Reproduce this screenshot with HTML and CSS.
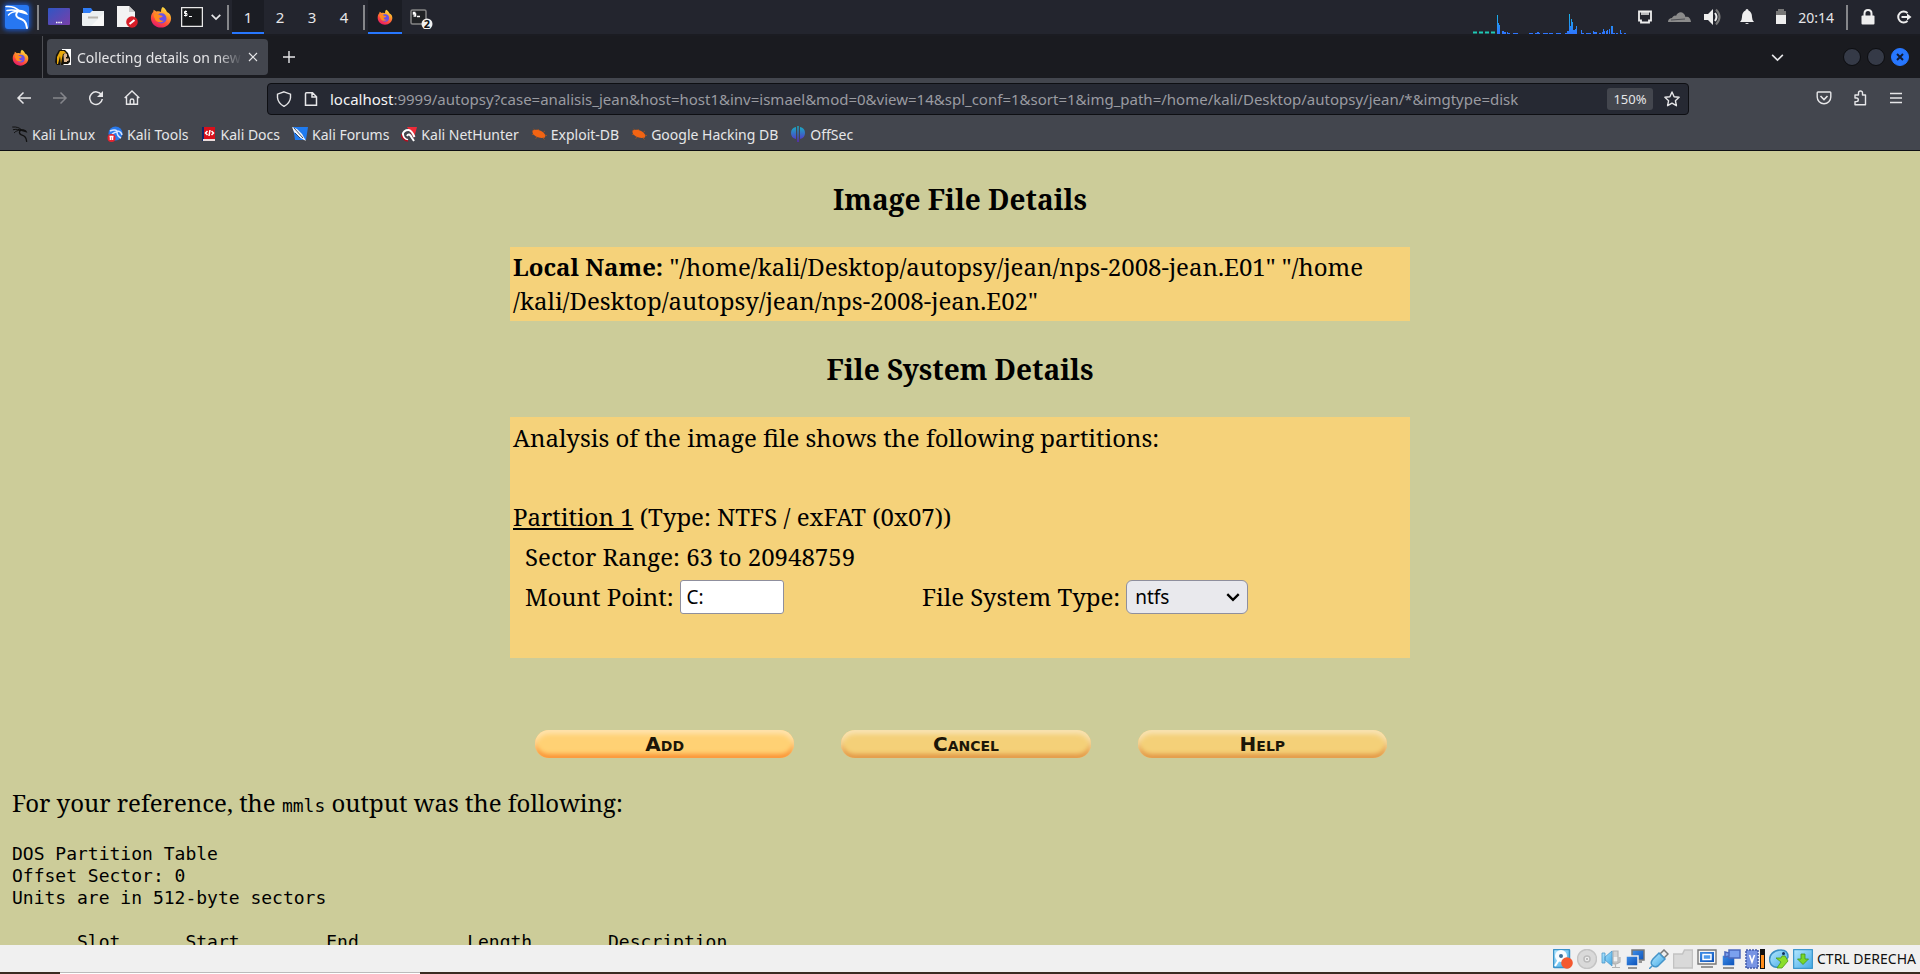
FILE: index.html
```html
<!DOCTYPE html>
<html lang="en">
<head>
<meta charset="utf-8">
<title>Collecting details on new image file</title>
<link rel="stylesheet" href="styles.css">
</head>
<body>
<svg class="defs" aria-hidden="true">
  <defs>
    <linearGradient id="fox-body" x1="0.8" y1="0" x2="0.3" y2="1">
      <stop offset="0" stop-color="#fff04a"/><stop offset="0.35" stop-color="#ffa02c"/><stop offset="0.7" stop-color="#ff4a3c"/><stop offset="1" stop-color="#e3186c"/>
    </linearGradient>
    <linearGradient id="blue-purple" x1="0" y1="0" x2="1" y2="1">
      <stop offset="0" stop-color="#2f56c4"/><stop offset="1" stop-color="#7a3fa8"/>
    </linearGradient>
    <linearGradient id="offsec-fill" x1="0" y1="0" x2="0" y2="1">
      <stop offset="0" stop-color="#16b3c4"/><stop offset="1" stop-color="#5b25c8"/>
    </linearGradient>
    <linearGradient id="graph-fill" x1="0" y1="0" x2="0" y2="1">
      <stop offset="0" stop-color="#17b4e6"/><stop offset="1" stop-color="#2f74ff"/>
    </linearGradient>
    <linearGradient id="vb-blue" x1="0" y1="0" x2="1" y2="1">
      <stop offset="0" stop-color="#3f8fe8"/><stop offset="1" stop-color="#0a4fb8"/>
    </linearGradient>
    <linearGradient id="vb-sky" x1="0" y1="0" x2="1" y2="1">
      <stop offset="0" stop-color="#b5e8ff"/><stop offset="1" stop-color="#43a9e6"/>
    </linearGradient>
    <symbol id="firefox" viewBox="0 0 24 24">
      <path d="M14 1c3 2 4 4 4.500 5.500C22 8 23 11 23 13.500 23 19 18 23.500 12 23.500S1 19 1 13c0-3 1-5 2.500-6.500L4 4l3 2c2-.6 4-.3 5 .5C12 4 12.500 2 14 1z" fill="url(#fox-body)"/>
      <circle cx="12.500" cy="13.500" r="5.500" fill="#6a4fe8"/>
      <path d="M4 9c3-1 5 0 7 1l3 1c-1 2-3 2-4 2 0 2 2 3.500 5 3-3 3-9 2-10-3-.5 0-1-2-1-4z" fill="#ff8a1e"/>
      <path d="M8.500 9.500c2-1.500 5-1.500 7 .5 1.500 1.500 2 3.500 1.500 5 1-5-3-8-8.500-5.500z" fill="#3f7cf0"/>
    </symbol>
    <symbol id="dragon" viewBox="0 0 24 24">
      <path d="M1 1.500c6-.5 10 1 13 4M2 5.500c4-1 8-.5 11 .5M3.500 10c2-2.500 5-3.500 9-3.500" fill="none" stroke="currentColor" stroke-width="1.500" stroke-linecap="round"/>
      <path d="M13 6.500c-2.500 2-2.500 5 .5 6.500 4 1.500 8 2.500 8.500 10" fill="none" stroke="currentColor" stroke-width="2" stroke-linecap="round"/>
      <path d="M11 4.500l6 .5c3 .6 5 2.200 6 5l-3.500-1L14 7.500z" fill="currentColor"/>
    </symbol>
    <symbol id="beetle" viewBox="0 0 16 16">
      <path d="M2.500 3l3 2.500M1 8.500l3-.5M4.500 12.500l2-1.500M8 4.500L7 3M13 9l3 .5M12 12l1.500 1.500M12.500 6l1.500-1" stroke="#b8530f" stroke-width=".8" fill="none"/>
      <path d="M1.500 4.500C4 3 8 3.500 11 5.500c2.500 1.500 4 4 3 6-3 .8-6 .6-9-1C2.500 9 1 7 1.500 4.500z" fill="#f26413"/>
    </symbol>
    <symbol id="chevron" viewBox="0 0 14 14"><path d="M2 4.500l5 5 5-5" fill="none" stroke="currentColor"/></symbol>
  </defs>
</svg>

<header class="panel">
  <button class="cell logo-cell" aria-label="Applications"><span class="logo"><svg width="24" height="24"><use href="#dragon"/></svg></span></button>
  <span class="sep"></span>
  <nav class="launchers" aria-label="Launchers">
    <button class="cell" aria-label="Show desktop"><svg width="22" height="18" viewBox="0 0 22 18"><rect width="22" height="17" rx="1" fill="url(#blue-purple)"/><path d="M8 14.500h6" stroke="#fff" stroke-width="1.500" stroke-dasharray="1.500 .75"/></svg></button>
    <button class="cell" aria-label="Files"><svg width="22" height="20" viewBox="0 0 22 20"><path d="M1 1h8l2 3h9v4H1z" fill="#2f7cf6"/><path d="M0 6h8l2-2h12v14q0 1-1 1H1q-1 0-1-1z" fill="#eceff1"/><path d="M22 6v12q0 1-1 1H9z" fill="#f8f8f8"/><path d="M6 10.500h10" stroke="#b8b4ae" stroke-width="2"/></svg></button>
    <button class="cell" aria-label="Text editor"><svg width="21" height="22" viewBox="0 0 21 22"><path d="M0 0h12l6 6v15H0z" fill="#f3f3f3"/><path d="M12 0v6h6z" fill="#c8c8c8"/><circle cx="15" cy="16" r="5.800" fill="#d81e28"/><path d="M12.500 18l5-4" stroke="#fff" stroke-width="2"/></svg></button>
    <button class="cell" aria-label="Firefox"><svg width="22" height="22"><use href="#firefox"/></svg></button>
    <button class="cell cell-narrow" aria-label="Terminal"><svg width="22" height="20" viewBox="0 0 22 20"><rect x=".5" y=".5" width="21" height="19" fill="#17191c" stroke="#e8e8e8"/><path d="M6 4.500H3.500v2H6v2H3M4.700 3.500v6M8 9.500h3" fill="none" stroke="#fff" stroke-width="1"/></svg></button>
    <button class="cell cell-chevron" aria-label="More"><svg class="bold" width="12" height="12"><use href="#chevron"/></svg></button>
  </nav>
  <span class="sep"></span>
  <nav class="spaces" aria-label="Workspaces">
    <button class="space active">1</button><button class="space">2</button><button class="space">3</button><button class="space">4</button>
  </nav>
  <span class="sep sep-tasks"></span>
  <nav class="tasks" aria-label="Windows">
    <button class="cell active" aria-label="Firefox window"><svg width="16" height="16"><use href="#firefox"/></svg></button>
    <button class="cell task-term" aria-label="Terminal windows"><svg width="24" height="24" viewBox="0 0 24 24"><rect x="2" y="5" width="15" height="14" rx="1.500" fill="#202225" stroke="#858585"/><path d="M6.500 7.500h-2v1.500h2v2h-2M8 11.500h3" fill="none" stroke="#fff"/><circle cx="18" cy="19" r="5.500" fill="#f1f1f1"/></svg><span class="count">2</span></button>
  </nav>
  <div class="tray">
    <svg class="graph" width="153" height="20" viewBox="0 0 153 20">
      <path d="M0 18.500h4m2 0h4m2 0h4m2 0h4" stroke="#1fc9b4" stroke-width="2"/>
      <path d="M24 20V1h1v8h1v2h1v9zM29 20v-3h2v1h2v2h1v-2h1v1h2v1zM40 19h5v1h-5zM56 19h4v1h-4zM62 19h2v-1h2v1h1v1h-5zM70 19h5v1h-5zM76 19h4v1h-4zM83 19h5v1h-5zM92 20v-1h2v-2h2V0h1v12h1V5h1v3h1v12zM100 20v-4h2v-1h1v-3h1v8zM108 20v-4h1v3h2v1zM113 19h5v1h-5zM120 20v-3h1v1h3v2zM126 19h2v1h-2zM129 20v-2h1v-3h1v2h1v3zM133 20v-3h1v-1h1v4zM136 20v-5h1v5zM138 20v-8h2v8zM140 19h2v1h-2zM143 19h2v1h-2zM147 20v-4h1v3h1v1zM151 19h2v1h-2z" fill="url(#graph-fill)"/>
    </svg>
    <button class="tray-item" aria-label="Network"><svg width="16" height="16" viewBox="0 0 16 16"><path d="M2 2.500h12v9h-2v2H4v-2H2z" fill="none" stroke="#eee" stroke-width="1.800"/><path d="M5 3v3M7 3v3M9 3v3M11 3v3" stroke="#eee"/></svg></button>
    <button class="tray-item" aria-label="Cloud"><svg width="23" height="12" viewBox="0 0 23 12"><path d="M0 11c0-3 2-4 4-4 1-2 3-3 4-2C10 0 16 0 17.500 6c3-1 5 1 5.500 5z" fill="#8b8b8b"/><path d="M3 9l14-1" stroke="#23252e" stroke-width=".6"/></svg></button>
    <button class="tray-item" aria-label="Volume"><svg width="18" height="18" viewBox="0 0 18 18"><path d="M0 6h4l5-5v16l-5-5H0z" fill="#eee"/><path d="M11 5q3 4 0 8" fill="none" stroke="#eee" stroke-width="2"/><path d="M12 1.500q7 7.500 0 15" fill="none" stroke="#777" stroke-width="2"/></svg></button>
    <button class="tray-item" aria-label="Notifications"><svg width="14" height="16" viewBox="0 0 14 16"><path d="M7 0q1.500 0 1.500 1.500Q12 3 12 8q0 3 2 5H0q2-2 2-5 0-5 3.500-6.500Q5.500 0 7 0zM5 14h4q-2 2-4 0z" fill="#eee"/></svg></button>
    <button class="tray-item" aria-label="Battery"><svg width="12" height="16" viewBox="0 0 12 16"><path d="M1 2h2V0h6v2h2v5H1z" fill="#777"/><path d="M1 6h10v9H1z" fill="#eee"/></svg></button>
    <time class="clock">20:14</time>
    <span class="sep"></span>
    <button class="tray-item tray-lock" aria-label="Lock"><svg width="14" height="16" viewBox="0 0 14 16"><rect x=".5" y="6.500" width="13" height="9" rx="1" fill="#eee"/><path d="M3.500 7V4.500q0-3.500 3.500-3.500t3.500 3.500V7" fill="none" stroke="#eee" stroke-width="2"/></svg></button>
    <button class="tray-item tray-exit" aria-label="Log out"><svg width="16" height="14" viewBox="0 0 16 14"><path d="M11.500 3A5.500 5.500 0 1 0 11.500 11" fill="none" stroke="#eee" stroke-width="2"/><path d="M5.500 7H12" stroke="#eee" stroke-width="2"/><path d="M11 3.500L15.500 7 11 10.500z" fill="#eee"/></svg></button>
  </div>
</header>

<div class="tabbar">
  <svg class="tab-home" width="17" height="17"><use href="#firefox"/></svg>
  <span class="tab-divider"></span>
  <div class="tab">
    <svg width="16" height="16" viewBox="0 0 16 16"><path d="M7 0h9v16H7z" fill="#fff"/><path d="M4 1h6l3 3 1 3 1 2v4l-2 2H9l-1 1H6V9l-1 7H2l-1-1-1-2 1-7z" fill="#17130a"/><path d="M5 2h4l2 2-3 1-1 4-1 6-1-8-2 8H2V8z" fill="#e9a90c"/><path d="M8.500 6l1.500-2 2 1v3l2 2-1 3H9z" fill="#dcb38c"/><path d="M11 8h2v1.500h-2zM12 12h2v1h-2z" fill="#17130a"/></svg>
    <span class="tab-title">Collecting details on new</span>
    <button class="plain tab-close" aria-label="Close tab"><svg width="10" height="10" viewBox="0 0 10 10"><path d="M1 1l8 8M9 1l-8 8" stroke="currentColor" stroke-width="1.200"/></svg></button>
  </div>
  <button class="plain tab-new" aria-label="New tab"><svg width="12" height="12" viewBox="0 0 12 12"><path d="M6 0v12M0 6h12" stroke="currentColor" stroke-width="1.400"/></svg></button>
  <div class="window-controls">
    <button class="plain tab-list" aria-label="List all tabs"><svg width="15" height="15"><use href="#chevron"/></svg></button>
    <button class="dot" aria-label="Minimise"></button><button class="dot" aria-label="Maximise"></button><button class="dot dot-close" aria-label="Close"><svg width="8" height="8" viewBox="0 0 8 8"><path d="M1 1l6 6M7 1L1 7" stroke="#101a33" stroke-width="2"/></svg></button>
  </div>
</div>

<div class="toolbar">
  <div class="nav-buttons">
    <button class="plain" aria-label="Back"><svg width="16" height="16" viewBox="0 0 16 16"><path d="M15 8H2M7.500 2.500L2 8l5.500 5.500" fill="none" stroke="currentColor" stroke-width="1.500"/></svg></button>
    <button class="plain dim" aria-label="Forward"><svg width="16" height="16" viewBox="0 0 16 16"><path d="M1 8h13M8.500 2.500L14 8l-5.500 5.500" fill="none" stroke="currentColor" stroke-width="1.500"/></svg></button>
    <button class="plain" aria-label="Reload"><svg width="16" height="16" viewBox="0 0 16 16"><path d="M13.500 5A6.300 6.300 0 1 0 14.300 9" fill="none" stroke="currentColor" stroke-width="1.500"/><path d="M15 1v6H9z" fill="currentColor"/></svg></button>
    <button class="plain" aria-label="Home"><svg width="16" height="16" viewBox="0 0 16 16"><path d="M.7 8L8 1l7.300 7M2.500 7v7.300h11V7M6.200 14v-3.500q0-1.500 1.800-1.500t1.800 1.500V14" fill="none" stroke="currentColor" stroke-width="1.400"/></svg></button>
  </div>
  <div class="urlbar">
    <svg width="16" height="16" viewBox="0 0 16 16"><path d="M8 .8l6.500 2.400v3.500Q14 12 8 15.300 2 12 1.500 6.700V3.200z" fill="none" stroke="currentColor" stroke-width="1.400"/></svg>
    <svg width="16" height="16" viewBox="0 0 16 16"><path d="M3.500 1.700h6l4 4v8.600h-11V2.700q0-1 1-1zM9 2v4h4.500" fill="none" stroke="currentColor" stroke-width="1.500"/></svg>
    <a class="url" href="#"><b>localhost</b>:9999/autopsy?case=analisis_jean&amp;host=host1&amp;inv=ismael&amp;mod=0&amp;view=14&amp;spl_conf=1&amp;sort=1&amp;img_path=/home/kali/Desktop/autopsy/jean/*&amp;imgtype=disk</a>
    <button class="zoom">150%</button>
    <button class="plain star" aria-label="Bookmark"><svg width="16" height="16" viewBox="0 0 16 16"><path d="M8 1l2.100 4.700 5 .6-3.700 3.400 1 5L8 12.200 3.600 14.700l1-5L.9 6.300l5-.6z" fill="none" stroke="currentColor" stroke-width="1.400" stroke-linejoin="round"/></svg></button>
  </div>
  <div class="tool-buttons">
    <button class="plain" aria-label="Pocket"><svg width="16" height="16" viewBox="0 0 16 16"><path d="M2 2h12q.8 0 .8.800V7a6.800 6.800 0 0 1-13.600 0V2.800Q1.200 2 2 2z" fill="none" stroke="currentColor" stroke-width="1.400"/><path d="M4.500 6L8 9.500 11.500 6" fill="none" stroke="currentColor" stroke-width="1.600"/></svg></button>
    <button class="plain" aria-label="Extensions"><svg width="16" height="16" viewBox="0 0 16 16"><path d="M3 14.800h10.500V5H10.500V3a2 2 0 0 0-4 0v2H3v3h1.500a1.800 1.800 0 0 1 0 3.600H3z" fill="none" stroke="currentColor" stroke-width="1.400" stroke-linejoin="round"/></svg></button>
    <button class="plain" aria-label="Menu"><svg width="14" height="12" viewBox="0 0 14 12"><path d="M1 1.500h12M1 6h12M1 10.500h12" stroke="currentColor" stroke-width="1.300"/></svg></button>
  </div>
</div>

<nav class="bookmarks" aria-label="Bookmarks">
  <a href="#" class="mark"><svg class="ink" width="16" height="16"><use href="#dragon"/></svg>Kali Linux</a>
  <a href="#" class="mark"><svg width="16" height="16" viewBox="0 0 16 16"><circle cx="8.500" cy="7.500" r="7" fill="#2878ea"/><path d="M3 5q5-2 7 0 4 0 5 4M5 8q3-2 5-2 0 4 4 6" fill="none" stroke="#d6e6ff"/><circle cx="4.500" cy="12" r="4" fill="#e5232e"/><path d="M2.500 10.500h4M3.500 10.500V14M5.500 10.500V14" stroke="#fff"/></svg>Kali Tools</a>
  <a href="#" class="mark"><svg width="16" height="16" viewBox="0 0 16 16"><path d="M1 1h2v14H1z" fill="#10286a"/><path d="M3 1h11v12H3z" fill="#d9101b"/><path d="M2 13h12v2H2z" fill="#e9dcdc"/><path d="M6.500 5L4.500 7l2 2M10.500 5l2 2-2 2M9 4L8 10" fill="none" stroke="#fff"/></svg>Kali Docs</a>
  <a href="#" class="mark"><svg width="16" height="16" viewBox="0 0 16 16"><path d="M1 1h15l-2 13H3z" fill="#1f7bf0"/><path d="M0 1l5 2 5 5 4 7-7-4-5-5z" fill="#f4f7fb"/><path d="M2 2l9 10M3 7l5 5" stroke="#1b2a44" stroke-width=".8"/></svg>Kali Forums</a>
  <a href="#" class="mark"><svg width="16" height="16" viewBox="0 0 16 16"><path d="M6 1h10l-3 11z" fill="#ee2b38"/><path d="M1.500 9q1-5 6-5 3 0 6 7M2 8q0 5 5 6M6 10q2-4 5 2l2 3" fill="none" stroke="#fff" stroke-width="2"/><path d="M0 8q1 6 7 7" fill="none" stroke="#b40d1d" stroke-width="1.500"/></svg>Kali NetHunter</a>
  <a href="#" class="mark"><svg width="16" height="16"><use href="#beetle"/></svg>Exploit-DB</a>
  <a href="#" class="mark"><svg width="16" height="16"><use href="#beetle"/></svg>Google Hacking DB</a>
  <a href="#" class="mark"><svg width="16" height="16" viewBox="0 0 16 16"><path d="M6 1v12Q1 12 1 7t5-6zM7.300 0h1.400v16H7.300zM10 1q5 1 5 6t-5 6z" fill="url(#offsec-fill)"/></svg>OffSec</a>
</nav>

<main class="page">
  <form class="details" onsubmit="return false">
    <h2>Image File Details</h2>
    <p class="card"><b>Local Name:</b> "/home/kali/Desktop/autopsy/jean/nps-2008-jean.E01" "/home<wbr>/kali/Desktop/autopsy/jean/nps-2008-jean.E02"</p>
    <h2>File System Details</h2>
    <section class="card partitions">
      <p>Analysis of the image file shows the following partitions:</p>
      <p class="partition"><u>Partition 1</u> (Type: NTFS / exFAT (0x07))</p>
      <p class="indent">Sector Range: 63 to 20948759</p>
      <div class="fields indent">
        <div class="field"><label for="mount">Mount Point:</label><input id="mount" type="text" value="C:"></div>
        <div class="field"><label for="fstype">File System Type:</label><span class="select-wrap"><select id="fstype"><option>ntfs</option></select><svg class="bold" width="16" height="16"><use href="#chevron"/></svg></span></div>
      </div>
    </section>
    <div class="actions">
      <button class="pill pill-bright">Add</button>
      <button class="pill">Cancel</button>
      <button class="pill">Help</button>
    </div>
  </form>
  <p class="note">For your reference, the <code>mmls</code> output was the following:</p>
  <pre class="output">DOS Partition Table
Offset Sector: 0
Units are in 512-byte sectors

      Slot      Start        End          Length       Description</pre>
</main>

<footer class="vmbar">
  <svg width="20" height="20" viewBox="0 0 20 20"><rect x=".5" y=".5" width="16" height="18" rx="1" fill="url(#vb-sky)" stroke="#3a92c8"/><circle cx="8" cy="7" r="6" fill="#f7fbff"/><circle cx="8" cy="7" r="2" fill="#3a6f9a"/><path d="M2 17l5-8" stroke="#fff" stroke-width="2"/><circle cx="14" cy="14" r="5.800" fill="#f4582f"/></svg>
  <svg width="20" height="20" viewBox="0 0 20 20"><circle cx="10" cy="10" r="9.500" fill="#d9d9d9" stroke="#c4c4c4"/><circle cx="10" cy="10" r="3" fill="#eee" stroke="#bbb"/><circle cx="10" cy="10" r="1" fill="#aaa"/></svg>
  <svg width="20" height="20" viewBox="0 0 20 20"><path d="M12 2h5v11h-5zM10 8v5q4 4 9 0V8M14.500 15v4M11 18.500h8" fill="#d4d4d4" stroke="#b4b4b4" stroke-width="1.200"/><path d="M1 4h3v10H1zM4 8l7-6v15l-7-6z" fill="url(#vb-sky)" stroke="#4b97c9" stroke-width=".8"/></svg>
  <svg width="20" height="20" viewBox="0 0 20 20"><path d="M7 1h12v10H7zM10 13h7" fill="url(#vb-blue)" stroke="#777" stroke-width="1.500"/><path d="M1 7h12v10H1z" fill="url(#vb-blue)" stroke="#eee" stroke-width="1.500"/><path d="M3 19h9" stroke="#777" stroke-width="1.500"/></svg>
  <svg width="20" height="20" viewBox="0 0 20 20"><path d="M11 5l4-4 4 4-4 4z" fill="#eee" stroke="#777"/><path d="M10 4l6 6-7 7q-4 2-6-1-2-2 1-6z" fill="url(#vb-sky)" stroke="#4594c9"/><path d="M3 17l-3 3" stroke="#4594c9" stroke-width="1.500"/></svg>
  <svg width="20" height="20" viewBox="0 0 20 20"><path d="M.5 5h9l2-4h8v18H.5z" fill="#d9d9d9" stroke="#c2c2c2"/></svg>
  <svg width="20" height="20" viewBox="0 0 20 20"><path d="M1 1h18v14H1zM4 18h12" fill="#f5f5f5" stroke="#777" stroke-width="1.400"/><path d="M3 3h14v10H3z" fill="url(#vb-blue)"/><path d="M6 5.500h8v5H6z" fill="#4e9aec" stroke="#fff"/></svg>
  <svg width="20" height="20" viewBox="0 0 20 20"><path d="M1 6h13v11H1z" fill="url(#vb-blue)" stroke="#eee"/><path d="M2 19h11" stroke="#777" stroke-width="1.500"/><path d="M8 1h11v8H8zM4 3l4 1v3L4 8z" fill="#7ba1ee" stroke="#4b68bd"/></svg>
  <svg width="20" height="20" viewBox="0 0 20 20"><rect x="1" y="1" width="12" height="18" fill="#7794e3" stroke="#4159ab" stroke-dasharray="2 1"/><path d="M4.500 6L7 13l2.500-7" fill="none" stroke="#fff" stroke-width="1.600"/><path d="M15 0h5v20h-5z" fill="#111"/><path d="M16 6h3v13h-3z" fill="#ff8c1a"/></svg>
  <svg width="20" height="20" viewBox="0 0 20 20"><path d="M1 13C-1 6 5 1 12 1c5 0 7 3 7 7l-5 8c-3 3-11 4-13-3z" fill="url(#vb-sky)" stroke="#3b8fc4"/><circle cx="14.500" cy="4.500" r="1.500" fill="#10305a"/><path d="M7 9h5l1-2h3l3 5-6 7H8l4-6z" fill="#8ade2b" stroke="#4b9a14" stroke-width=".8"/></svg>
  <svg width="20" height="20" viewBox="0 0 20 20"><rect x=".5" y=".5" width="19" height="19" rx="1" fill="url(#vb-sky)" stroke="#3e97cc"/><path d="M8 5h4v5h3.500L10 15.500 4.500 10H8z" fill="#79d62a" stroke="#3f9418" stroke-width=".8"/></svg>
  <span>CTRL DERECHA</span>
</footer>
<div class="host-edge"><span></span></div>
</body>
</html>
```
FILE: styles.css
```css
* { box-sizing: border-box; }

body {
  margin: 0;
  height: 100vh;
  display: flex;
  flex-direction: column;
  overflow: hidden;
  font-family: "Noto Sans", sans-serif;
  font-size: 14px;
  color: #e6e6e8;
  background: #cccc99;
}

svg { display: block; flex: none; stroke-width: 1.5; }
.defs { position: absolute; width: 0; height: 0; }
button { font: inherit; color: inherit; border: 0; padding: 0; background: none; }
a { color: inherit; text-decoration: none; }
h2, p, pre { margin: 0; }

/* Desktop panel */
.panel {
  flex: none;
  height: 36px;
  display: flex;
  align-items: center;
  background: #23252e;
  border-bottom: 2px solid #1b1c22;
}
.cell { width: 34px; height: 34px; display: flex; align-items: center; justify-content: center; }
.logo-cell { margin-right: 3px; }
.logo { color: #fff; background: #2777f2; border-radius: 3px; box-shadow: 0 0 4px 2px #1d4fae; }
.sep { flex: none; width: 2px; height: 25px; background: #85868a; }
.launchers { display: flex; margin-left: 3px; }
.cell-narrow { width: 27px; }
.cell-chevron { width: 22px; }
.bold { stroke-width: 2; }
.spaces { display: flex; margin-left: 3px; font-size: 15px; }
.space { width: 32px; height: 34px; }
.active { background: #1b1d24; box-shadow: inset 0 -2px #2777ff; }
.sep-tasks { margin-left: 3px; }
.tasks { display: flex; margin-left: 3px; gap: 2px; }
.task-term { position: relative; }
.count {
  position: absolute;
  right: 5px;
  bottom: 3px;
  width: 12px;
  color: #111;
  font-size: 11px;
  font-weight: 700;
  line-height: 14px;
  text-align: center;
}
.tray { margin-left: auto; display: flex; align-items: center; height: 34px; padding-right: 8px; }
.graph { align-self: flex-end; margin-right: 2px; }
.tray-item { width: 34px; display: flex; justify-content: center; }
.clock { margin-right: 12px; }
.tray-lock { width: 40px; }
.tray-exit { width: 24px; justify-content: flex-end; }

/* Tabs */
.tabbar {
  flex: none;
  height: 42px;
  display: flex;
  align-items: center;
  padding-right: 11px;
  background: #1a1b20;
}
.tab-home { margin: 0 13px 0 12px; }
.tab-divider { width: 1px; align-self: stretch; background: #4e4f54; }
.tab {
  width: 221px;
  height: 36px;
  margin-left: 4px;
  padding: 0 10px 0 8px;
  display: flex;
  align-items: center;
  gap: 6px;
  border-radius: 4px;
  background: #43464e;
}
.tab-title {
  flex: 1;
  white-space: nowrap;
  -webkit-mask-image: linear-gradient(to right, #000 85%, transparent);
  mask-image: linear-gradient(to right, #000 85%, transparent);
}
.plain { display: flex; align-items: center; justify-content: center; }
.tab-new { width: 42px; }
.window-controls { margin-left: auto; display: flex; align-items: center; gap: 6px; }
.tab-list { margin-right: 52px; }
.dot {
  width: 18px;
  height: 18px;
  display: flex;
  align-items: center;
  justify-content: center;
  border-radius: 50%;
  border: 1px solid #0c0d10;
  background: #353a47;
}
.dot-close { border-color: #2777ff; background: #2777ff; }

/* Navigation */
.toolbar {
  flex: none;
  height: 40px;
  display: flex;
  align-items: center;
  padding: 0 6px;
  background: #43464e;
}
.nav-buttons { display: flex; margin-right: 117px; }
.nav-buttons .plain { width: 36px; height: 32px; }
.dim { color: #85868b; }
.urlbar {
  flex: 1;
  min-width: 0;
  height: 32px;
  margin-top: 2px;
  display: flex;
  align-items: center;
  gap: 11px;
  padding: 0 8px;
  border: 1px solid #0e0f13;
  border-radius: 4px;
  background: #262933;
}
.url { flex: 1; min-width: 0; overflow: hidden; white-space: nowrap; color: #9a9ba1; font-size: 15px; }
.url b { color: #f4f4f5; font-weight: 400; }
.zoom { width: 46px; height: 22px; border-radius: 3px; background: #43464e; font-size: 13px; }
.tool-buttons { display: flex; margin-left: 117px; }
.tool-buttons .plain { width: 36px; height: 32px; }

.bookmarks {
  flex: none;
  height: 33px;
  display: flex;
  align-items: center;
  gap: 12px;
  padding: 0 12px;
  border-bottom: 1px solid #0e0f13;
  background: #43464e;
}
.mark { display: flex; align-items: center; gap: 4px; }
.ink { color: #111; }

/* Page */
.page {
  flex: 1;
  min-height: 0;
  overflow: hidden;
  padding: 0 12px;
  font-family: "Noto Serif", "Liberation Serif", serif;
  font-size: 24px;
  line-height: 34px;
  color: #000;
}
.details { max-width: 900px; margin: 0 auto; }
.details h2 { padding: 28px 0; font-size: 28px; line-height: 40px; text-align: center; }
.card { padding: 3px; background: #f5d27a; }
.partitions { padding-bottom: 41px; line-height: 40px; }
.partitions > p:first-child { line-height: 36px; }
.partition { margin-top: 41px; }
.indent { padding-left: 12px; }
.fields { display: grid; grid-template-columns: 45fr 55fr; }
.field { display: flex; align-items: center; gap: 6px; }
.field input, .field select {
  height: 34px;
  border: 1px solid #8f8f9d;
  font-family: "Noto Sans", sans-serif;
  font-size: 19px;
  color: #000;
}
.field input { width: 104px; padding: 0 6px; border-radius: 3px; background: #fff; }
.select-wrap { display: grid; align-items: center; justify-items: end; }
.select-wrap > * { grid-area: 1 / 1; }
.select-wrap svg { margin-right: 7px; pointer-events: none; }
.field select { width: 122px; padding: 0 8px; border-radius: 6px; background: #e9e9ed; appearance: none; }
.actions {
  display: grid;
  grid-template-columns: 26fr 25fr 25fr;
  column-gap: 47px;
  padding: 72px 23px 0 25px;
}
.pill {
  height: 28px;
  border-radius: 14px;
  background: #f4d078;
  box-shadow: inset 0 4px 5px #f8e3b4, inset 0 -4px 4px #e39a48;
  color: #1c1608;
  font-family: "DejaVu Sans", sans-serif;
  font-size: 20px;
  font-weight: 700;
  font-variant: small-caps;
  line-height: 24px;
}
.pill-bright { background: #ffd174; box-shadow: inset 0 4px 5px #ffe3ae, inset 0 -4px 4px #fb9638; }
.note { margin-top: 28px; }
.note code, .output { font-family: "DejaVu Sans Mono", monospace; font-size: 18px; }
.output { margin-top: 20px; line-height: 22px; }

/* Virtual machine status bar */
.vmbar {
  flex: none;
  height: 27px;
  display: flex;
  align-items: center;
  justify-content: flex-end;
  gap: 4px;
  padding-right: 4px;
  background: #f0f0f0;
  color: #111;
}
.host-edge { flex: none; height: 2px; padding-left: 60px; background: #3a2c22; }
.host-edge span { display: block; width: 360px; height: 2px; border-top: 1px solid #bbb; background: #fff; }
```
